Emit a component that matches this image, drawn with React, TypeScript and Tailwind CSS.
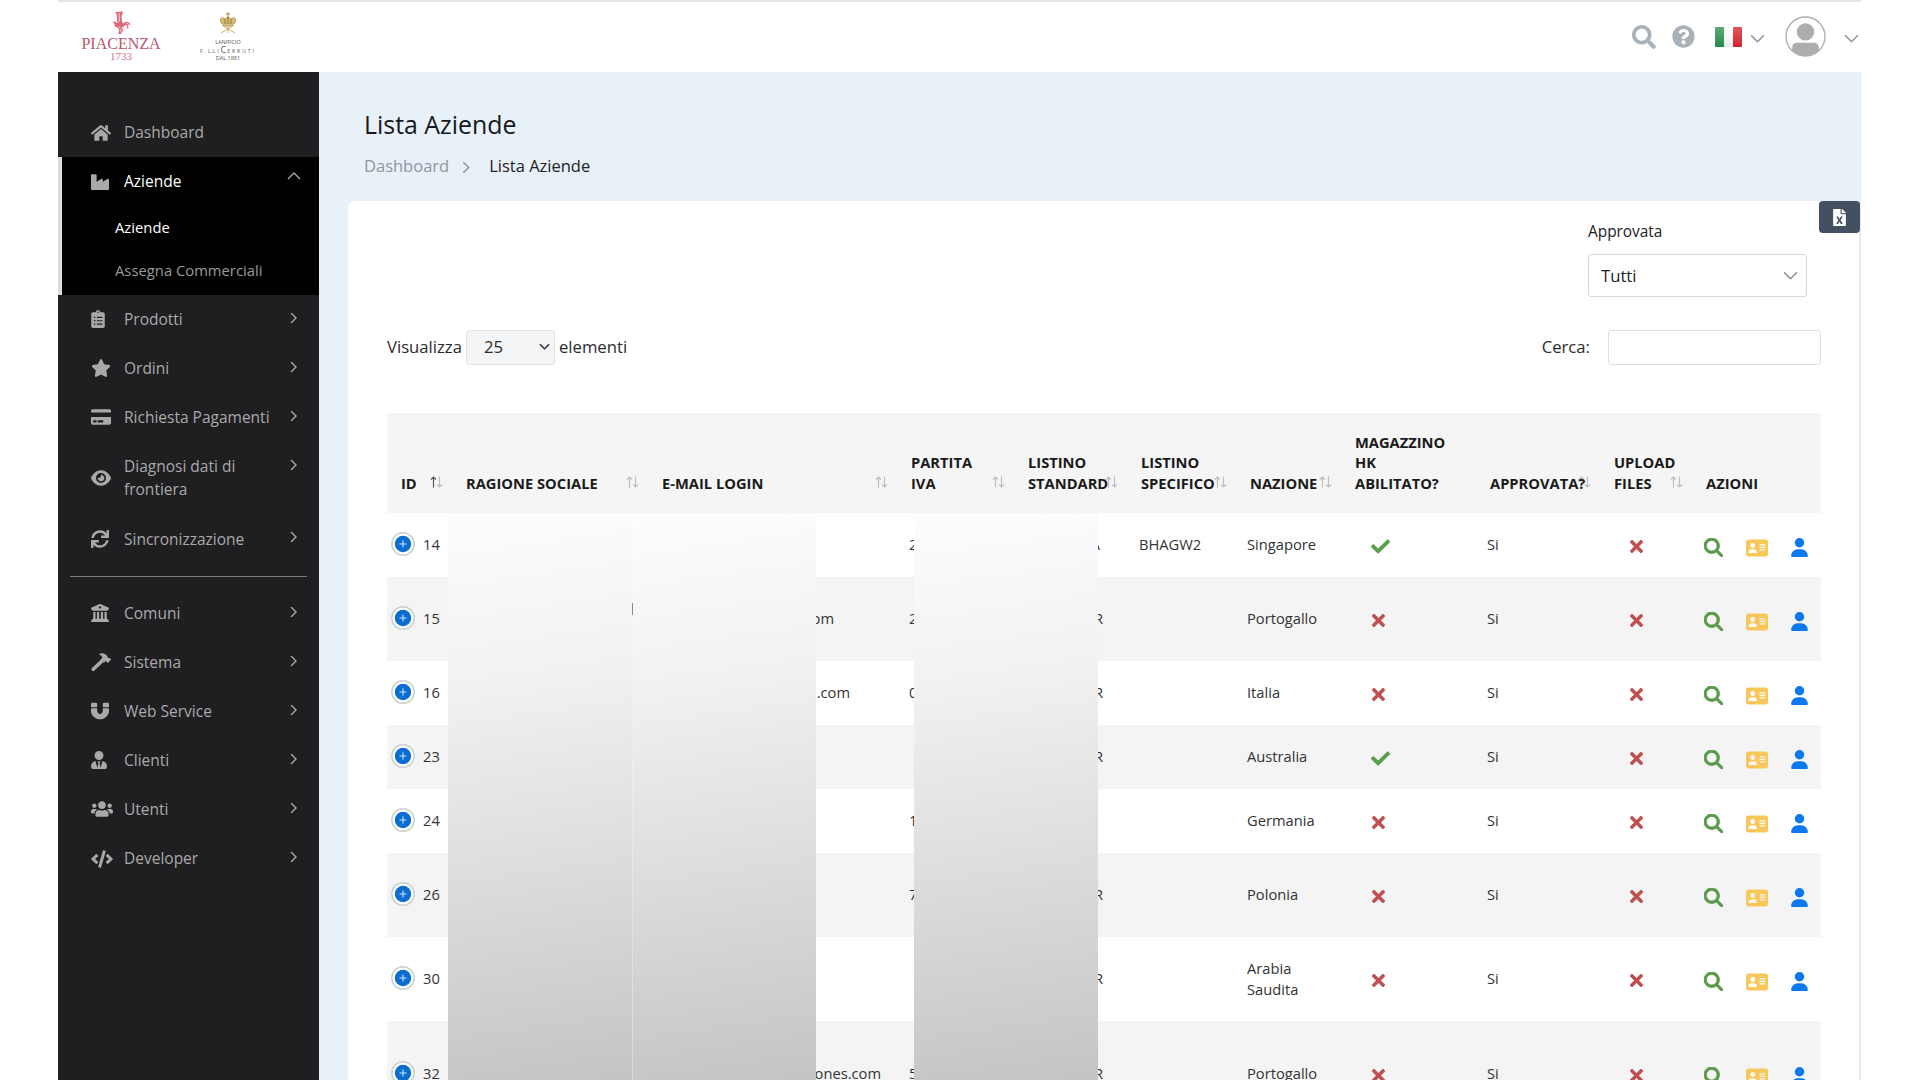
import type { ComponentType, ReactNode } from "react";
import {
  FaCheck,
  FaClipboardList,
  FaCode,
  FaCreditCard,
  FaFileExcel,
  FaHome,
  FaIndustry,
  FaMagnet,
  FaQuestionCircle,
  FaSearch,
  FaSync,
  FaTimes,
  FaUsers,
  FaUserTie,
} from "react-icons/fa";
import { FaAddressCard, FaBuildingColumns, FaEye, FaMagnifyingGlass, FaStar, FaUser } from "react-icons/fa6";

interface ChevronProps {
  direction: "up" | "down" | "right";
  className?: string;
}

const chevronPaths = {
  up: "M1 8 L7 2 L13 8",
  down: "M1 2 L7 8 L13 2",
  right: "M4 0 L9 5 L4 10",
};

function Chevron({ direction, className }: ChevronProps) {
  return (
    <svg viewBox="0 0 14 10" fill="none" stroke="currentColor" className={className}>
      <path d={chevronPaths[direction]} strokeWidth="1.4" />
    </svg>
  );
}

function Hammer({ className }: { className?: string }) {
  return (
    <svg viewBox="0 0 20 20" fill="currentColor" className={className}>
      <path d="M2.200 17.300 L11 9" stroke="currentColor" strokeWidth="3.600" strokeLinecap="round" />
      <path d="M7.500 2.300 C11 .5 14 1.300 16.200 3.800 L17 6 L19 6 L20 7.500 L17 11 L15.300 9.800 L14.800 8.800 L13 10.800 L9.800 7.600 L11.300 5.800 C11 4 9.500 3 7.500 2.300Z" />
    </svg>
  );
}

/* ---------- Header ---------- */

function PiacenzaLogo() {
  return (
    <div className="flex w-[80px] flex-col items-center">
      <svg viewBox="0 0 20 24" className="h-[24px] w-[20px]" fill="#e0687c">
        <path d="M4.500 1 L12 .5 L11.500 3 L10.500 5 L11 11 L13.500 13.500 L11 17 L5 15 L1.500 10.500 L6 11 L6 5 Z" />
        <path
          d="M12 15.500 C13 10.500 18.500 10.500 18.500 14 M13.500 14.500 C16 12 17.500 14 16.500 17.500 M3.500 14 L9 18 L8 23 M9 17 L11.500 18.500 L9 23"
          fill="none"
          stroke="#e0687c"
          strokeWidth="1.400"
        />
        <path d="M8 2 L8.500 10 L5 12" fill="none" stroke="#fff" strokeWidth=".7" />
      </svg>
      <span className="mt-px font-['Liberation_Serif',serif] text-[16px] leading-[15px] text-[#b9576c]">
        PIACENZA
      </span>
      <span className="font-['Liberation_Serif',serif] text-[11px] leading-[10px] text-[#cf7384]">1733</span>
    </div>
  );
}

function CerrutiLogo() {
  return (
    <div className="ml-[38px] flex w-[58px] flex-col items-center text-[#55575b]">
      <svg viewBox="0 0 20 24" className="h-[24px] w-[20px]" fill="none" stroke="#c9a55a">
        <path d="M10 1 V6 M8 3 H12" strokeWidth="1.300" />
        <path d="M4 13 C0 8 4 5 7 8 L10 5.500 L13 8 C16 5 20 8 16 13 Z" fill="#d5b978" />
        <path d="M7 8 V13 M10 6 V13 M13 8 V13" stroke="#8d6f31" strokeWidth=".8" />
        <path d="M4.500 14.500 H15.500" strokeWidth="1.800" />
        <path d="M3 22 L14 15.500 M17 22 L6 15.500 M10 15 V22" strokeWidth=".9" />
      </svg>
      <span className="mt-[3px] text-[5.5px] leading-[8px]">LANIFICIO</span>
      <span className="whitespace-nowrap text-[5px] leading-[8px] tracking-[2px]">
        F.LLI<span className="text-[9px] tracking-[1px]">C</span>ERRUTI
      </span>
      <span className="text-[5.5px] leading-[7px]">DAL 1881</span>
    </div>
  );
}

function Header() {
  return (
    <header className="flex h-[72px] shrink-0 items-start border-t-2 border-[#e4e4e4] bg-white">
      <div className="flex pl-[23px] pt-[9px]">
        <PiacenzaLogo />
        <CerrutiLogo />
      </div>
      <div className="ml-auto flex h-[69px] items-center text-[#a9b1b9]">
        <FaSearch className="size-[24px]" />
        <FaQuestionCircle className="ml-4 size-[23px]" />
        <div className="ml-5 flex h-5 w-[27px] overflow-hidden rounded-[1px]">
          <span className="w-1/3 bg-linear-to-b from-[#5fa97b] to-[#1f8a4c]" />
          <span className="w-1/3 bg-linear-to-b from-white to-[#ececec]" />
          <span className="w-1/3 bg-linear-to-b from-[#e2555c] to-[#d3202c]" />
        </div>
        <Chevron direction="down" className="ml-2 mt-1 h-[11px] w-[15px] text-[#8a939c]" />
        <svg viewBox="0 0 40 40" className="ml-5 size-[41px]">
          <circle cx="20" cy="20" r="19" fill="#fff" stroke="#adadad" strokeWidth="1.300" />
          <circle cx="20" cy="15.500" r="8.500" fill="#adadad" />
          <path d="M7 34 V31 Q7 26 12 26 H28 Q33 26 33 31 V34 Q20 44 7 34Z" fill="#adadad" />
        </svg>
        <Chevron direction="down" className="ml-[18px] mr-[2px] mt-1 h-[11px] w-[15px] text-[#8a939c]" />
      </div>
    </header>
  );
}

/* ---------- Sidebar ---------- */

interface NavItemProps {
  icon: ComponentType<{ className?: string }>;
  label: ReactNode;
  iconClass?: string;
  chevron?: "up" | "right";
  active?: boolean;
  tall?: boolean;
}

function NavItem({ icon: Icon, label, iconClass = "size-[18px]", chevron, active, tall }: NavItemProps) {
  return (
    <div
      className={`flex items-center pl-[33px] ${tall ? "h-[72.5px]" : "h-[49.1px]"} ${active ? "-ml-1" : ""}`}
    >
      <div className="flex w-[33px] shrink-0 items-center">
        <Icon className={`shrink-0 text-[#a9a9ab] ${iconClass}`} />
      </div>
      <span
        className={`w-[150px] whitespace-nowrap text-[15.5px] leading-[23px] ${
          active ? "text-white" : "text-[#a9a9ab]"
        }`}
      >
        {label}
      </span>
      {chevron && (
        <Chevron
          direction={chevron}
          className={`ml-auto mr-[18px] h-[10px] w-[14px] self-start text-[#a9a9ab] ${
            chevron === "up" ? "-mr-px mt-[14px]" : "mt-[18px]"
          }`}
        />
      )}
    </div>
  );
}

function Sidebar() {
  return (
    <nav className="flex w-[261px] shrink-0 flex-col bg-[#1f1f21] pt-9">
      <NavItem icon={FaHome} label="Dashboard" iconClass="size-[20px]" />
      <div className="border-l-4 border-[#dcdcdc] bg-black pb-[3px]">
        <NavItem icon={FaIndustry} label="Aziende" chevron="up" active />
        <div className="flex h-[42px] items-center pl-[53px] text-[14.800px] text-white">Aziende</div>
        <div className="flex h-[43.5px] items-center pl-[53px] text-[14.800px] text-[#9a9a9c]">
          Assegna Commerciali
        </div>
      </div>
      <NavItem icon={FaClipboardList} label="Prodotti" iconClass="h-[18px] w-[14px]" chevron="right" />
      <NavItem icon={FaStar} label="Ordini" iconClass="size-[20px]" chevron="right" />
      <NavItem icon={FaCreditCard} label="Richiesta Pagamenti" iconClass="size-[20px]" chevron="right" />
      <NavItem
        icon={FaEye}
        label={
          <>
            Diagnosi dati di
            <br />
            frontiera
          </>
        }
        iconClass="size-[20px]"
        chevron="right"
        tall
      />
      <NavItem icon={FaSync} label="Sincronizzazione" chevron="right" />
      <hr className="mx-3 my-[12px] border-[#77787a]" />
      <NavItem icon={FaBuildingColumns} label="Comuni" chevron="right" />
      <NavItem icon={Hammer} label="Sistema" iconClass="size-[20px]" chevron="right" />
      <NavItem icon={FaMagnet} label="Web Service" chevron="right" />
      <NavItem icon={FaUserTie} label="Clienti" iconClass="h-[18px] w-[16px]" chevron="right" />
      <NavItem icon={FaUsers} label="Utenti" iconClass="size-[22px]" chevron="right" />
      <NavItem icon={FaCode} label="Developer" iconClass="size-[22px]" chevron="right" />
    </nav>
  );
}

/* ---------- Table ---------- */

interface Column {
  label: ReactNode;
  width: number;
  sort?: "none" | "asc";
}

const columns: Column[] = [
  { label: "ID", width: 65, sort: "asc" },
  { label: "RAGIONE SOCIALE", width: 196, sort: "none" },
  { label: "E-MAIL LOGIN", width: 249, sort: "none" },
  { label: <>PARTITA<br />IVA</>, width: 117, sort: "none" },
  { label: <>LISTINO<br />STANDARD</>, width: 113, sort: "none" },
  { label: <>LISTINO<br />SPECIFICO</>, width: 109, sort: "none" },
  { label: "NAZIONE", width: 105, sort: "none" },
  { label: <>MAGAZZINO<br />HK<br />ABILITATO?</>, width: 135 },
  { label: "APPROVATA?", width: 124, sort: "none" },
  { label: <>UPLOAD<br />FILES</>, width: 92, sort: "none" },
  { label: "AZIONI", width: 129 },
];

interface Company {
  id: number;
  height: string;
  email?: string;
  emailClass?: string;
  vat?: string;
  list?: string;
  custom?: string;
  country: ReactNode;
  hk?: boolean;
}

const companies: Company[] = [
  { id: 14, height: "h-[64px]", vat: "2", list: "A", custom: "BHAGW2", country: "Singapore", hk: true },
  { id: 15, height: "h-[84px]", email: "com", emailClass: "pr-[63px]", vat: "2", list: "R", country: "Portogallo" },
  { id: 16, height: "h-[64px]", email: ".com", emailClass: "pr-[47px]", vat: "0", list: "R", country: "Italia" },
  { id: 23, height: "h-[64px]", list: "R", country: "Australia", hk: true },
  { id: 24, height: "h-[64px]", vat: "1", country: "Germania" },
  { id: 26, height: "h-[84px]", vat: "7", list: "R", country: "Polonia" },
  { id: 30, height: "h-[84px]", list: "R", country: <>Arabia<br />Saudita</> },
  { id: 32, height: "h-[106px]", email: "ones.com", emailClass: "pr-[16px]", vat: "5", list: "R", country: "Portogallo" },
];

function SortArrows({ sort }: { sort: "none" | "asc" }) {
  return (
    <svg viewBox="0 0 13 12" fill="none" className="absolute bottom-[25px] right-[9px] h-[12px] w-[13px]">
      <path d="M3.500 11.500 V1 M1 3.500 L3.500 1 L6 3.500" stroke={sort === "asc" ? "#555" : "#bdbdbd"} strokeWidth="1.200" />
      <path d="M9.500 .5 V11 M7 8.500 L9.500 11 L12 8.500" stroke="#bdbdbd" strokeWidth="1.200" />
    </svg>
  );
}

function CompanyRow({ company }: { company: Company }) {
  const { id, height, email, emailClass, vat, list, custom, country, hk } = company;
  return (
    <tr className={`${height} odd:bg-white even:bg-[#f4f4f4]`}>
      <td className="p-0">
        <div className="flex items-center">
          <svg viewBox="0 0 26 26" className="-mt-[3px] ml-[3px] size-[26px]">
            <circle cx="13" cy="13" r="11.200" fill="#fff" stroke="#c9cfcf" strokeWidth="1.500" />
            <circle cx="13" cy="13" r="8.200" fill="#0b6dcd" />
            <path d="M13 9.500 V16.500 M9.500 13 H16.500" stroke="#cfe6fa" strokeWidth="1.100" />
          </svg>
          <span className="-mt-px ml-[7px]">{id}</span>
        </div>
      </td>
      <td />
      <td className={`pb-px text-right ${emailClass ?? ""}`}>{email}</td>
      <td className="pb-px pl-[12px]">{vat}</td>
      <td className={`pb-px text-right ${list === "A" ? "pr-[27px]" : "pr-[24px]"}`}>{list}</td>
      <td className="pb-px pl-[12px]">{custom}</td>
      <td className="pb-px pl-[11px] leading-[20.5px]">{country}</td>
      <td className="pl-[30px]">
        {hk ? (
          <FaCheck className="mt-[2px] size-[19px] text-[#5a9e4b]" />
        ) : (
          <FaTimes className="-ml-[2px] mt-[2px] size-[19px] text-[#c0504f]" />
        )}
      </td>
      <td className="pb-px pl-[11px]">Si</td>
      <td className="pl-[27px]">
        <FaTimes className="mt-[2px] size-[19px] text-[#c0504f]" />
      </td>
      <td className="pl-[12px]">
        <div className="mt-[5px] flex items-center">
          <FaMagnifyingGlass className="size-[19px] stroke-[24] text-[#5a9a4a]" />
          <FaAddressCard className="ml-[23px] size-[22px] text-[#f7c759]" />
          <FaUser className="ml-[22px] h-[19px] w-[19px] text-[#0a78ee]" />
        </div>
      </td>
    </tr>
  );
}

function CompaniesTable() {
  return (
    <div className="relative mx-[39px] mt-[48px]">
      <table className="w-[1434px] table-fixed border-collapse text-[14.700px] text-[#333]">
        <colgroup>
          {columns.map((column, i) => (
            <col key={i} style={{ width: column.width }} />
          ))}
        </colgroup>
        <thead>
          <tr className="h-[100px] bg-[#f5f5f5]">
            {columns.map((column, i) => (
              <th
                key={i}
                className="relative whitespace-nowrap pb-[20px] pl-[14px] text-left align-bottom text-[14.700px] font-bold leading-[20.5px] text-[#1a1a1a]"
              >
                {column.sort && <SortArrows sort={column.sort} />}
                <span className="relative">{column.label}</span>
              </th>
            ))}
          </tr>
        </thead>
        <tbody>
          {companies.map((company) => (
            <CompanyRow key={company.id} company={company} />
          ))}
        </tbody>
      </table>

      {/* Panels hiding the customers' private data */}
      <div className="absolute left-[61px] top-[100px] h-[568px] w-[184px] bg-[linear-gradient(172deg,#fdfdfd_0%,#f1f1f1_30%,#dedede_60%,#c4c4c4_100%)]" />
      <div className="absolute left-[246px] top-[100px] h-[568px] w-[183px] bg-[linear-gradient(172deg,#fdfdfd_0%,#f1f1f1_30%,#dedede_60%,#c4c4c4_100%)]" />
      <div className="absolute left-[245px] top-[100px] h-[568px] w-px bg-linear-to-b from-white to-[#d8d8d8]" />
      <div className="absolute left-[527px] top-[100px] h-[568px] w-[184px] bg-[linear-gradient(172deg,#fdfdfd_0%,#f1f1f1_30%,#dedede_60%,#c4c4c4_100%)]" />
      <div className="absolute left-[245px] top-[190px] h-[12px] w-px bg-[#8a8a8a]" />
    </div>
  );
}

/* ---------- Page ---------- */

export default function App() {
  return (
    <div className="h-[1080px] w-[1920px] overflow-hidden bg-white font-['Open_Sans',sans-serif]">
      <div className="ml-[58px] flex h-full w-[1803px] flex-col">
        <Header />
        <div className="flex min-h-0 flex-1">
          <Sidebar />
          <main className="flex-1 overflow-hidden bg-[#e8f0f8]">
            <div className="h-[129px] pl-[45px] pt-[34px]">
              <h1 className="text-[24.900px] leading-[36px] text-[#17191c]">Lista Aziende</h1>
              <div className="mt-[12px] flex items-center text-[16.5px] leading-[24px]">
                <span className="text-[#9097a3]">Dashboard</span>
                <Chevron direction="right" className="ml-[10px] mt-[2px] h-[11px] w-[15px] text-[#9097a3]" />
                <span className="ml-[15px] text-[#1f2125]">Lista Aziende</span>
              </div>
            </div>

            <section className="relative ml-[29px] h-[900px] rounded-tl-md border-r-2 border-[#e6eaf0] bg-white">
              <button className="absolute -right-px top-0 flex h-[32px] w-[41px] items-center justify-center rounded-[4px] bg-[#435061]">
                <FaFileExcel className="size-[17px] text-white" />
              </button>

              <div className="flex flex-col items-end pr-[52px] pt-[19px]">
                <div className="w-[219px]">
                  <label className="block text-[15.400px] leading-[24px] text-[#222]">Approvata</label>
                  <div className="mt-[10px] flex h-[43px] items-center justify-between rounded-[3px] border border-[#d5d9dd] pl-[12px] pr-[8px] text-[16.700px] text-[#222]">
                    Tutti
                    <Chevron direction="down" className="h-[11px] w-[15px] text-[#8a8f96]" />
                  </div>
                </div>
              </div>

              <div className="ml-[39px] mt-[32px] flex h-[36px] w-[1434px] items-center text-[16.700px] text-[#2b2b2b]">
                <span>Visualizza</span>
                <div className="ml-[4px] flex h-[35px] w-[89px] items-center justify-between rounded-[3px] border border-[#dfe3e6] bg-[#f3f5f7] pl-[17px] pr-[4px]">
                  25
                  <svg viewBox="0 0 12 8" fill="none" className="h-[8px] w-[11px]">
                    <path d="M1 1 L6 6 L11 1" stroke="#333" strokeWidth="1.600" />
                  </svg>
                </div>
                <span className="ml-[4px]">elementi</span>
                <span className="ml-auto">Cerca:</span>
                <div className="ml-[18px] h-[35px] w-[213px] rounded-[3px] border border-[#dcdfe3] bg-white" />
              </div>

              <CompaniesTable />
            </section>
          </main>
        </div>
      </div>
    </div>
  );
}
